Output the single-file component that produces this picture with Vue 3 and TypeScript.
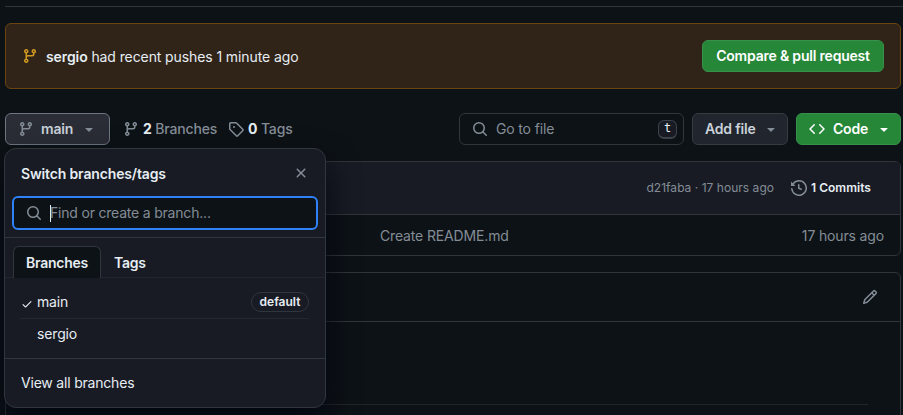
<script setup lang="ts">
import { ref } from 'vue'

interface Branch {
  name: string
  current: boolean
  isDefault: boolean
}

const branches: Branch[] = [
  { name: 'main', current: true, isDefault: true },
  { name: 'sergio', current: false, isDefault: false },
]
const tabs = ['Branches', 'Tags']
const activeTab = ref('Branches')

const icons = {
  branch:
    'M9.5 3.25a2.25 2.25 0 1 1 3 2.122V6A2.5 2.5 0 0 1 10 8.5H6a1 1 0 0 0-1 1v1.128a2.251 2.251 0 1 1-1.5 0V5.372a2.25 2.25 0 1 1 1.5 0v1.836A2.493 2.493 0 0 1 6 7h4a1 1 0 0 0 1-1v-.628A2.25 2.25 0 0 1 9.5 3.25Zm-6 0a.75.75 0 1 0 1.5 0 .75.75 0 0 0-1.5 0Zm8.25-.75a.75.75 0 1 0 0 1.5.75.75 0 0 0 0-1.5ZM4.25 12a.75.75 0 1 0 0 1.5.75.75 0 0 0 0-1.5Z',
  tag: 'M1 7.775V2.75C1 1.784 1.784 1 2.75 1h5.025c.464 0 .91.184 1.238.513l6.25 6.25a1.75 1.75 0 0 1 0 2.474l-5.026 5.026a1.75 1.75 0 0 1-2.474 0l-6.25-6.25A1.752 1.752 0 0 1 1 7.775Zm1.5 0c0 .066.026.13.073.177l6.25 6.25a.25.25 0 0 0 .354 0l5.025-5.025a.25.25 0 0 0 0-.354l-6.25-6.25a.25.25 0 0 0-.177-.073H2.75a.25.25 0 0 0-.25.25ZM6 5a1 1 0 1 1 0 2 1 1 0 0 1 0-2Z',
  search:
    'M10.68 11.74a6 6 0 0 1-7.922-8.982 6 6 0 0 1 8.982 7.922l3.04 3.04a.749.749 0 0 1-.326 1.275.749.749 0 0 1-.734-.215ZM11.5 7a4.499 4.499 0 1 0-8.997 0A4.499 4.499 0 0 0 11.5 7Z',
  code: 'm11.28 3.22 4.25 4.25a.75.75 0 0 1 0 1.06l-4.25 4.25a.749.749 0 0 1-1.275-.326.749.749 0 0 1 .215-.734L13.94 8l-3.72-3.72a.749.749 0 0 1 .326-1.275.749.749 0 0 1 .734.215Zm-6.56 0a.751.751 0 0 1 1.042.018.751.751 0 0 1 .018 1.042L2.06 8l3.72 3.72a.749.749 0 0 1-.326 1.275.749.749 0 0 1-.734-.215L.47 8.53a.75.75 0 0 1 0-1.06Z',
  caret: 'm4.427 7.427 3.396 3.396a.25.25 0 0 0 .354 0l3.396-3.396A.25.25 0 0 0 11.396 7H4.604a.25.25 0 0 0-.177.427Z',
  history:
    'm.427 1.927 1.215 1.215a8.002 8.002 0 1 1-1.6 5.685.75.75 0 1 1 1.493-.154 6.5 6.5 0 1 0 1.18-4.458l1.358 1.358A.25.25 0 0 1 3.896 6H.25A.25.25 0 0 1 0 5.75V2.104a.25.25 0 0 1 .427-.177ZM7.75 4a.75.75 0 0 1 .75.75v2.992l2.028.812a.75.75 0 0 1-.557 1.392l-2.5-1A.751.751 0 0 1 7 8.25v-3.5A.75.75 0 0 1 7.75 4Z',
  pencil:
    'M11.013 1.427a1.75 1.75 0 0 1 2.474 0l1.086 1.086a1.75 1.75 0 0 1 0 2.474l-8.61 8.61c-.21.21-.47.364-.756.445l-3.251.93a.75.75 0 0 1-.927-.928l.929-3.25c.081-.286.235-.547.445-.758l8.61-8.61Zm.176 4.823L9.75 4.81l-6.286 6.287a.253.253 0 0 0-.064.108l-.558 1.953 1.953-.558a.253.253 0 0 0 .108-.064Zm1.238-3.763a.25.25 0 0 0-.354 0L10.811 3.75l1.439 1.44 1.263-1.263a.25.25 0 0 0 0-.354Z',
  close:
    'M3.72 3.72a.75.75 0 0 1 1.06 0L8 6.94l3.22-3.22a.749.749 0 0 1 1.275.326.749.749 0 0 1-.215.734L9.06 8l3.22 3.22a.749.749 0 0 1-.326 1.275.749.749 0 0 1-.734-.215L8 9.06l-3.22 3.22a.751.751 0 0 1-1.042-.018.751.751 0 0 1-.018-1.042L6.94 8 3.72 4.78a.75.75 0 0 1 0-1.06Z',
  check:
    'M13.78 4.22a.75.75 0 0 1 0 1.06l-7.25 7.25a.75.75 0 0 1-1.06 0L2.22 9.28a.751.751 0 0 1 .018-1.042.751.751 0 0 1 1.042-.018L6 10.94l6.72-6.72a.75.75 0 0 1 1.06 0Z',
}
</script>

<template>
  <main class="page">
    <div class="rule"></div>
    <section class="banner">
      <svg class="icon warn" viewBox="0 0 16 16"><path :d="icons.branch" /></svg>
      <p class="banner-text"><b>sergio</b> had recent pushes 1 minute ago</p>
      <button class="btn primary compare">Compare &amp; pull request</button>
    </section>

    <section class="toolbar">
      <div class="branch-anchor">
        <button class="btn branch-btn">
          <svg class="icon" viewBox="0 0 16 16"><path :d="icons.branch" /></svg>
          <span class="branch-name">main</span>
          <svg class="icon" viewBox="0 0 16 16"><path :d="icons.caret" /></svg>
        </button>

        <div class="popup">
          <header class="popup-head">
            <span class="popup-title">Switch branches/tags</span>
            <svg class="icon close" viewBox="0 0 16 16"><path :d="icons.close" /></svg>
          </header>
          <div class="find">
            <svg class="icon" viewBox="0 0 16 16"><path :d="icons.search" /></svg>
            <span class="cursor"></span>
            <span class="find-text">Find or create a branch...</span>
          </div>
          <nav class="tabs">
            <button
              v-for="tab in tabs"
              :key="tab"
              class="tab"
              :class="{ active: tab === activeTab }"
              @click="activeTab = tab"
            >
              {{ tab }}
            </button>
          </nav>
          <ul class="branches">
            <li v-for="b in branches" :key="b.name" class="branch">
              <span class="check">
                <svg v-if="b.current" viewBox="0 0 16 16"><path :d="icons.check" /></svg>
              </span>
              <span class="name">{{ b.name }}</span>
              <span v-if="b.isDefault" class="pill">default</span>
            </li>
          </ul>
          <footer class="view-all">View all branches</footer>
        </div>
      </div>

      <div class="stat branch-stat">
        <svg class="icon" viewBox="0 0 16 16"><path :d="icons.branch" /></svg>
        <span><b>2</b> Branches</span>
      </div>
      <div class="stat tag-stat">
        <svg class="icon" viewBox="0 0 16 16"><path :d="icons.tag" /></svg>
        <span><b>0</b> Tags</span>
      </div>

      <div class="goto">
        <svg class="icon" viewBox="0 0 16 16"><path :d="icons.search" /></svg>
        <span class="goto-text">Go to file</span>
        <kbd>t</kbd>
      </div>
      <button class="btn add">
        <span>Add file</span>
        <svg class="icon" viewBox="0 0 16 16"><path :d="icons.caret" /></svg>
      </button>
      <button class="btn primary code">
        <svg class="icon" viewBox="0 0 16 16"><path :d="icons.code" /></svg>
        <span>Code</span>
        <svg class="icon" viewBox="0 0 16 16"><path :d="icons.caret" /></svg>
      </button>
    </section>

    <section class="files">
      <div class="commit-bar">
        <span class="sha">d21faba · 17 hours ago</span>
        <svg class="icon" viewBox="0 0 16 16"><path :d="icons.history" /></svg>
        <b class="commits">1 Commits</b>
      </div>
      <div class="file-row">
        <span class="message">Create README.md</span>
        <span class="age">17 hours ago</span>
      </div>
    </section>

    <section class="readme">
      <div class="readme-head">
        <svg class="icon" viewBox="0 0 16 16"><path :d="icons.pencil" /></svg>
      </div>
      <div class="readme-body"></div>
    </section>
  </main>
</template>

<style>
body {
  background: #0d1216;
}
</style>

<style scoped>
* {
  box-sizing: border-box;
}
.page {
  height: 415px;
  overflow: hidden;
  padding: 6px 2px 0 5px;
  background: #0d1216;
  color: #e6edf3;
  font: 14px/20px Inter, 'Liberation Sans', sans-serif;
  letter-spacing: -0.15px;
}
b {
  font-weight: 600;
}
.icon {
  display: block;
  flex: none;
  width: 16px;
  height: 16px;
  fill: #848d97;
}
.rule {
  height: 1px;
  margin-right: -2px;
  background: #30363b;
}
.banner {
  display: flex;
  align-items: center;
  height: 66px;
  margin-top: 16px;
  padding: 0 16px;
  border: 1px solid #6b4510;
  border-radius: 6px;
  background: #302418;
}
.warn {
  fill: #d29922;
}
.banner-text {
  margin: 0 auto 0 8px;
  padding-top: 2px;
  letter-spacing: -0.1px;
}
.btn {
  display: flex;
  align-items: center;
  height: 32px;
  padding: 0 12px;
  border: 1px solid #363b42;
  border-radius: 6px;
  background: #21252d;
  color: #c9d1d9;
  font: inherit;
  font-weight: 600;
  letter-spacing: -0.2px;
  white-space: nowrap;
}
.primary {
  border-color: #38914a;
  background: #268738;
  color: #fff;
}
.primary .icon {
  fill: #fff;
}
.compare {
  justify-content: center;
  width: 182px;
  padding: 0;
}
.toolbar {
  display: flex;
  align-items: center;
  height: 32px;
  margin-top: 24px;
}
.branch-anchor {
  position: relative;
}
.branch-btn {
  width: 105px;
  border-color: #6e7681;
  background: #2a2d36;
}
.branch-name {
  margin: 0 auto 0 7px;
}
.stat {
  display: flex;
  align-items: center;
  color: #848d97;
  font-weight: 500;
  white-space: nowrap;
}
.stat b {
  color: #e6edf3;
  font-weight: 700;
}
.branch-stat {
  gap: 4px;
  width: 105px;
  margin-left: 13px;
}
.tag-stat {
  gap: 4px;
}
.goto {
  display: flex;
  align-items: center;
  width: 225px;
  height: 32px;
  margin: 0 8px 0 auto;
  padding: 0 6px 0 12px;
  border: 1px solid #30363b;
  border-radius: 6px;
  color: #848d97;
}
.goto-text {
  margin: 0 auto 0 8px;
}
kbd {
  width: 19px;
  height: 19px;
  margin-top: 1px;
  border: 1px solid #3c414a;
  border-bottom-width: 2px;
  border-radius: 6px;
  background: #181b23;
  color: #e6edf3;
  font: 12px/15px 'DejaVu Sans Mono', monospace;
  text-align: center;
}
.add {
  justify-content: space-between;
  width: 96px;
  margin-right: 8px;
  padding-right: 8px;
}
.code {
  width: 105px;
  padding-right: 8px;
}
.code span {
  margin: 0 auto 0 8px;
}
.files {
  margin-top: 16px;
  border: 1px solid #30363b;
  border-radius: 6px;
  overflow: hidden;
}
.commit-bar {
  display: flex;
  align-items: center;
  justify-content: flex-end;
  height: 53px;
  padding-right: 29px;
  border-bottom: 1px solid #30363b;
  background: #181b23;
  font-size: 12px;
  letter-spacing: 0.03px;
}
.sha {
  margin-right: 17px;
  color: #848d97;
}
.commits {
  margin-left: 4px;
}
.file-row {
  display: flex;
  align-items: center;
  justify-content: space-between;
  height: 40px;
  padding: 2px 16px 0 374px;
  color: #848d97;
}
.readme {
  margin-top: 16px;
  border: 1px solid #30363b;
  border-radius: 6px 6px 0 0;
}
.readme-head {
  display: flex;
  align-items: center;
  justify-content: flex-end;
  height: 49px;
  padding-right: 22px;
  border-bottom: 1px solid #30363b;
}
.readme-body {
  height: 83px;
  margin: 0 32px 40px;
  border-bottom: 1px solid #21262b;
}
.popup {
  position: absolute;
  z-index: 2;
  top: 35px;
  left: -1px;
  width: 322px;
  height: 260px;
  border: 1px solid #30363d;
  border-radius: 12px;
  background: #181b23;
  box-shadow: 0 16px 32px rgba(1, 4, 15, 0.85);
}
.popup-head {
  display: flex;
  align-items: center;
  justify-content: space-between;
  height: 47px;
  padding: 2px 16px 0;
}
.popup-title {
  font-weight: 600;
}
.close {
  margin-top: -2px;
}
.find {
  display: flex;
  align-items: center;
  height: 34px;
  margin: 0 7px;
  padding-left: 12px;
  border: 2px solid #2f81f7;
  border-radius: 6px;
  background: #0d1216;
  color: #848d97;
  letter-spacing: -0.2px;
}
.cursor {
  width: 1px;
  height: 17px;
  margin: 0 -1px 0 8px;
  background: #e6edf3;
}
.tabs {
  display: flex;
  height: 41px;
  margin-top: 7px;
  padding: 8px 8px 0;
  border-top: 1px solid #30363d;
  border-bottom: 1px solid #21262d;
}
.tab {
  height: 32px;
  padding: 0 12px;
  border: 1px solid transparent;
  border-bottom: 0;
  border-radius: 6px 6px 0 0;
  background: none;
  color: #e6edf3;
  font: inherit;
  font-weight: 600;
  letter-spacing: -0.25px;
}
.active {
  width: 88px;
  border-color: #30363d;
  background: #0d1216;
}
.branches {
  height: 80px;
  margin: 0;
  padding: 8px 16px 0 15px;
  list-style: none;
}
.branch {
  display: flex;
  align-items: center;
  height: 32px;
}
.branch + .branch {
  height: 31px;
  border-top: 1px solid #23272e;
}
.check {
  width: 17px;
  padding: 4px 0 0 1px;
}
.check svg {
  display: block;
  width: 12px;
  height: 12px;
  fill: #e6edf3;
}
.pill {
  width: 58px;
  height: 20px;
  margin-left: auto;
  border: 1px solid #30363d;
  border-radius: 10px;
  font-size: 12px;
  font-weight: 600;
  line-height: 18px;
  text-align: center;
  letter-spacing: 0;
}
.view-all {
  display: flex;
  align-items: center;
  height: 50px;
  padding: 0 0 2px 16px;
  border-top: 1px solid #30363d;
  letter-spacing: -0.2px;
}
</style>
